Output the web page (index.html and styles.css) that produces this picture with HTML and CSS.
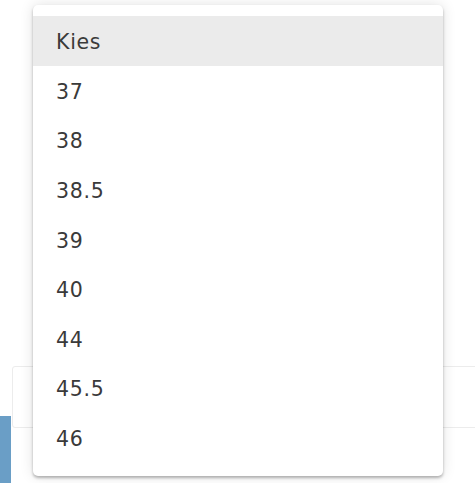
FILE: index.html
```html
<!DOCTYPE html>
<html>
<head>
<meta charset="utf-8">
<link rel="stylesheet" href="styles.css">
</head>
<body>
<div class="page">
  <div class="field"></div>
  <div class="blue"></div>
</div>
<ul class="menu">
  <li class="item active">Kies</li>
  <li class="item">37</li>
  <li class="item">38</li>
  <li class="item">38.5</li>
  <li class="item">39</li>
  <li class="item">40</li>
  <li class="item">44</li>
  <li class="item">45.5</li>
  <li class="item">46</li>
</ul>
</body>
</html>
```
FILE: styles.css
```css
html, body {
  margin: 0;
  padding: 0;
  background: #fff;
  width: 475px;
  height: 483px;
  overflow: hidden;
}
.page {
  position: relative;
  height: 483px;
}
.field {
  position: absolute;
  left: 12px;
  top: 366px;
  width: 470px;
  height: 60px;
  border: 1px solid #ececec;
  border-radius: 3px;
}
.blue {
  position: absolute;
  left: 0;
  top: 416px;
  width: 11px;
  height: 67px;
  background: #6a9ec6;
}
.menu {
  position: absolute;
  left: 33px;
  top: 5px;
  width: 410px;
  height: 471px;
  margin: 0;
  padding: 11px 0 0;
  box-sizing: border-box;
  list-style: none;
  background: #fff;
  border-radius: 5px;
  box-shadow: 0 2px 3px rgba(0, 0, 0, 0.28), 0 0 14px rgba(0, 0, 0, 0.12);
  font-family: "DejaVu Sans", Verdana, sans-serif;
  font-size: 20.5px;
  letter-spacing: 0.7px;
  color: #3a3a3a;
}
.item {
  height: 49.6px;
  display: flex;
  align-items: center;
  padding-left: 23px;
  padding-top: 3px;
  box-sizing: border-box;
}
.item.active {
  background: #ebebeb;
}
```
